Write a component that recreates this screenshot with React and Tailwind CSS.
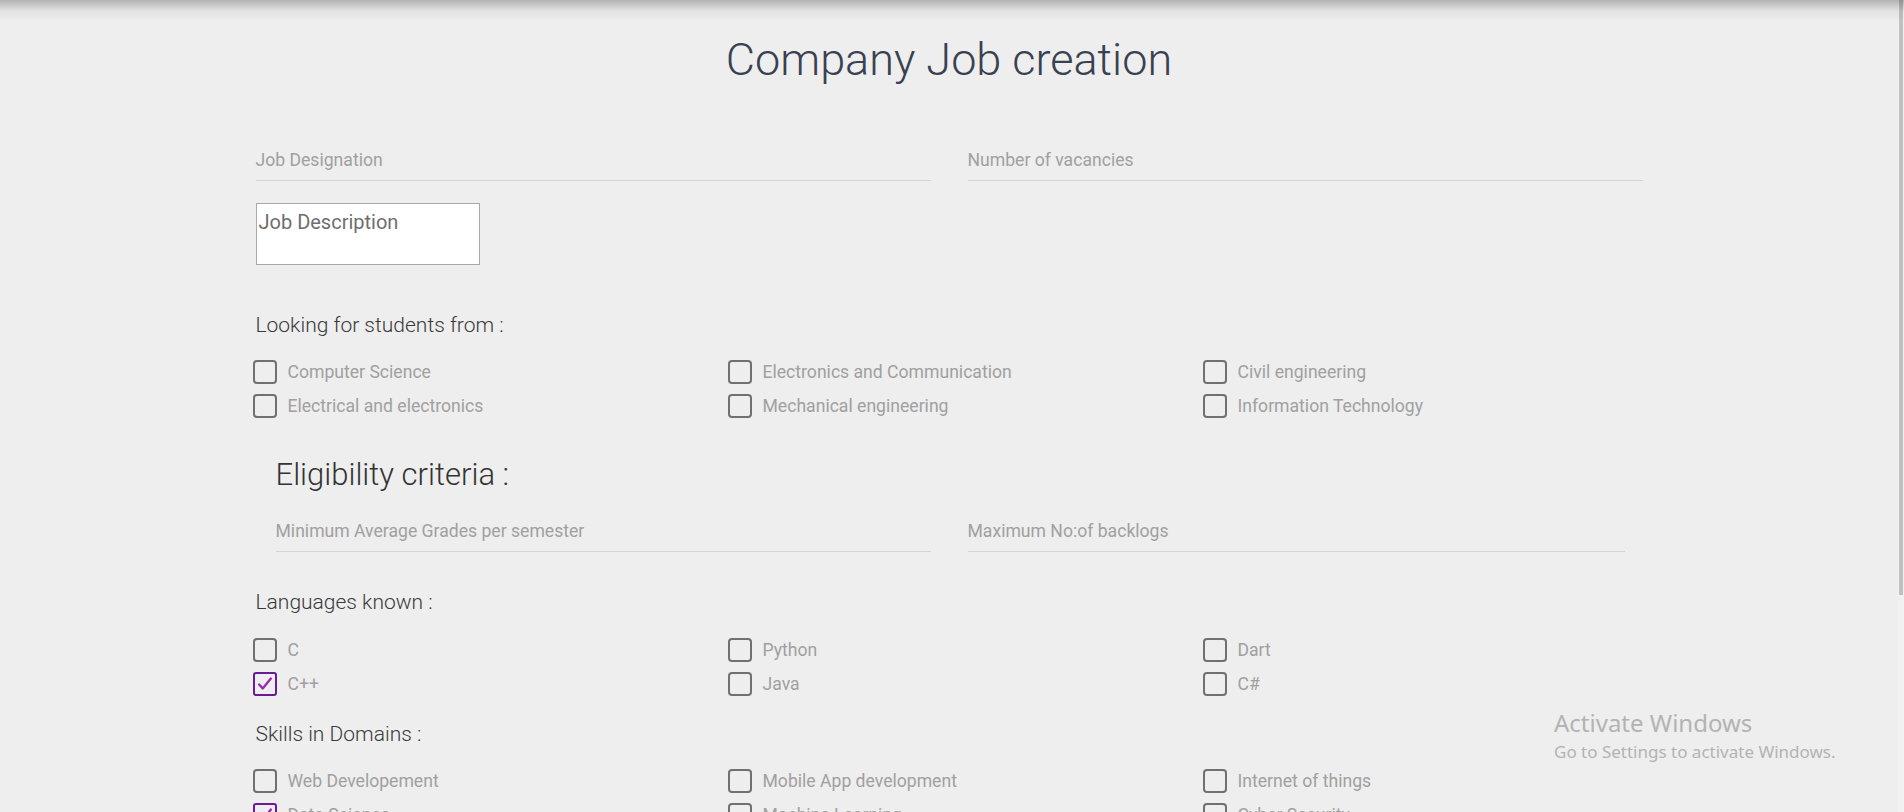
import React from 'react';

const branches = [
    ['Computer Science', false],
    ['Electronics and Communication', false],
    ['Civil engineering', false],
    ['Electrical and electronics', false],
    ['Mechanical engineering', false],
    ['Information Technology', false],
];

const languages = [
    ['C', false],
    ['Python', false],
    ['Dart', false],
    ['C++', true],
    ['Java', false],
    ['C#', false],
];

const domains = [
    ['Web Developement', false],
    ['Mobile App development', false],
    ['Internet of things', false],
    ['Data Science', true],
    ['Machine Learning', false],
    ['Cyber Security', false],
];

const CheckItem = ({ label, checked }) => (
    <label className="flex items-center h-[24px] gap-[11px] cursor-pointer">
        {checked ? (
            <span className="w-[24px] h-[24px] shrink-0 rounded-[3px] border-2 border-[#6a1b9a] flex items-center justify-center">
                <svg viewBox="0 0 20 20" className="w-[18px] h-[18px]" fill="none" stroke="#9c27b0" strokeWidth="2.6" strokeLinecap="round" strokeLinejoin="round">
                    <path d="M3.5 10.5l4 4.5 9-11" />
                </svg>
            </span>
        ) : (
            <span className="w-[24px] h-[24px] shrink-0 rounded-[4px] border-2 border-[#707070]" />
        )}
        <span className="text-[17.6px] leading-[24px] text-[#a0a0a0]">{label}</span>
    </label>
);

const CheckGrid = ({ items, className }) => (
    <div className={`grid grid-cols-[475px_475px_475px] gap-y-[10px] -ml-[3px] ${className}`}>
        {items.map(([label, checked]) => (
            <CheckItem key={label} label={label} checked={checked} />
        ))}
    </div>
);

const LineField = ({ label, className }) => (
    <div className={`border-b border-[#d4d4d4] pb-[8px] ${className}`}>
        <div className="text-[17.6px] leading-[24px] text-[#a0a0a0]">{label}</div>
    </div>
);

const SectionTitle = ({ children, className }) => (
    <h5 className={`text-[21px] leading-[24px] font-light text-[#3a3a3a] font-['Roboto_Light','Roboto',sans-serif] ${className}`}>{children}</h5>
);

export default function App() {
    return (
        <div className="relative h-[812px] overflow-hidden bg-[#eeeeee] flex font-['Roboto',_'Noto_Sans',_sans-serif]">
            {/* shadow of the navbar above */}
            <div className="absolute top-0 left-0 right-0 h-[22px] bg-linear-to-b from-black/25 via-black/5 to-transparent pointer-events-none" />

            <div className="flex-1">
                <h1 className="pt-[32px] text-center text-[45px] leading-[56px] font-light text-[#394150] font-['Roboto_Light','Roboto',sans-serif]">Company Job creation</h1>

                <div className="w-[1387px] mx-auto">
                    <div className="grid grid-cols-[675px_675px] gap-x-[37px] mt-[60px]">
                        <LineField label="Job Designation" />
                        <LineField label="Number of vacancies" />
                    </div>

                    <textarea
                        className="block mt-[22px] w-[224px] h-[62px] bg-white border border-[#a9a9a9] pt-[7px] pl-[2px] text-[20px] leading-[23px] resize-none outline-none placeholder:text-[#6e6e6e]"
                        placeholder="Job Description"
                    />

                    <SectionTitle className="mt-[48px]">Looking for students from :</SectionTitle>
                    <CheckGrid items={branches} className="mt-[23px]" />

                    <h4 className="mt-[39px] pl-[20px] text-[31px] leading-[36px] font-light text-[#333] font-['Roboto_Light','Roboto',sans-serif]">Eligibility criteria :</h4>
                    <div className="grid grid-cols-[675px_675px] gap-x-[37px] mt-[26px]">
                        <LineField label="Minimum Average Grades per semester" className="ml-[20px]" />
                        <LineField label="Maximum No:of backlogs" className="mr-[18px]" />
                    </div>

                    <SectionTitle className="mt-[38px]">Languages known :</SectionTitle>
                    <CheckGrid items={languages} className="mt-[24px]" />

                    <SectionTitle className="mt-[26px]">Skills in Domains :</SectionTitle>
                    <CheckGrid items={domains} className="mt-[23px]" />
                </div>
            </div>

            {/* scrollbar */}
            <div className="w-[6px] h-full bg-[#f1f1f1] flex flex-col px-[1px]">
                <div className="h-[595px] bg-[#c1c1c1]" />
            </div>

            {/* windows watermark */}
            <div className="absolute left-[1554px] top-[707px] text-[#b3b3b3] font-['Noto_Sans',_sans-serif] pointer-events-none">
                <div className="text-[24px] leading-[32px]">Activate Windows</div>
                <div className="mt-[2px] text-[17px] leading-[21px]">Go to Settings to activate Windows.</div>
            </div>
        </div>
    );
}
